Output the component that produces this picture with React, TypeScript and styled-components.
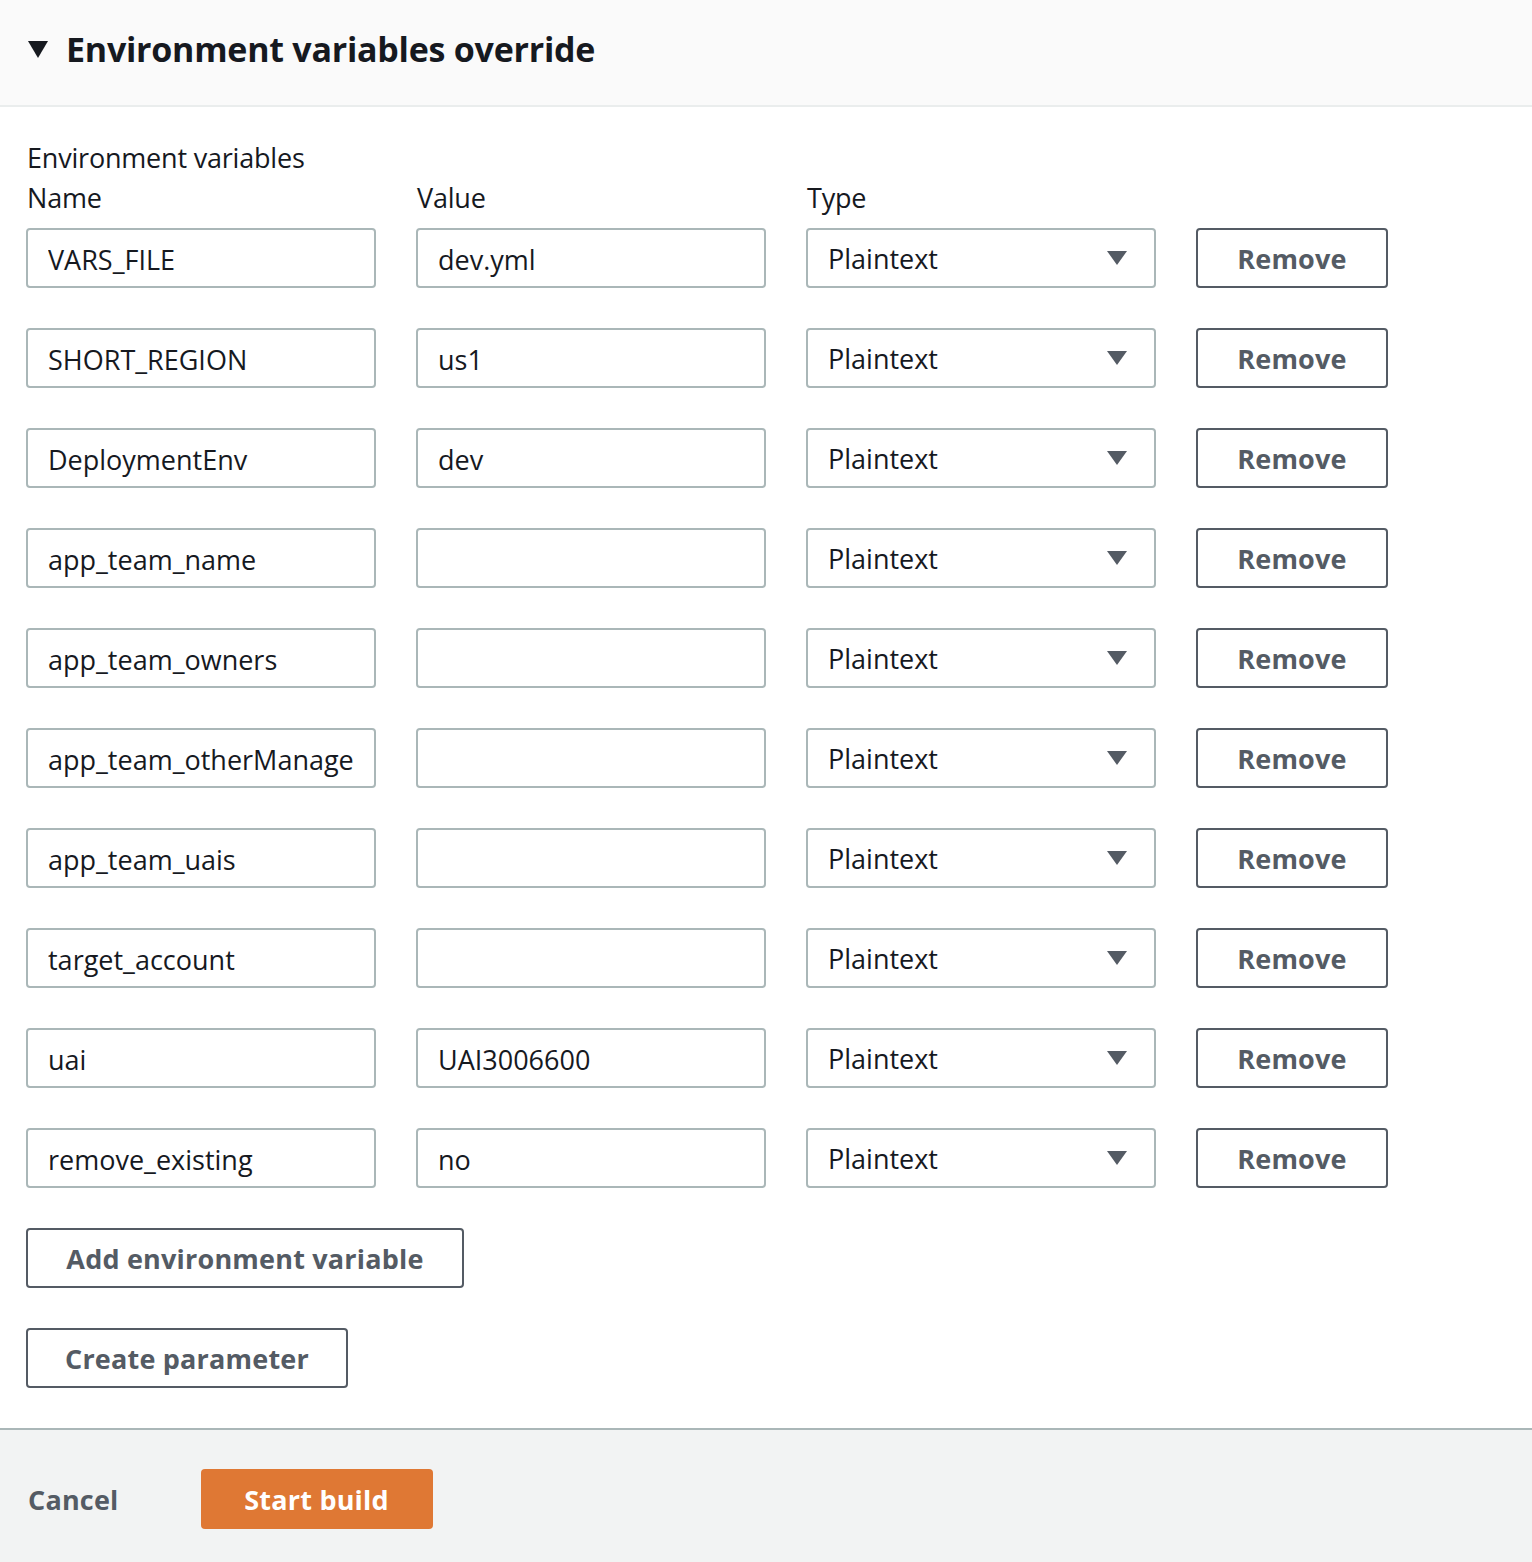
import React from "react";
import styled, { createGlobalStyle } from "styled-components";

const Global = createGlobalStyle`
  html, body { margin: 0; padding: 0; background: #ffffff; }
  body { font-family: "Open Sans", "Noto Sans", sans-serif; color: #16191f; }
  * { box-sizing: border-box; }
`;

const Page = styled.div`
  width: 1532px;
  min-height: 1562px;
  display: flex;
  flex-direction: column;
  background: #ffffff;
`;

const Header = styled.div`
  height: 107px;
  background: #fafafa;
  border-bottom: 2px solid #eaeded;
  display: flex;
  align-items: center;
  padding: 0 0 8px 28px;
  gap: 18px;
`;

const Caret = styled.svg`
  width: 20px;
  height: 18px;
  flex: none;
`;

const Title = styled.h2`
  margin: 0;
  font-family: "Open Sans", sans-serif;
  font-weight: 700;
  font-size: 34px;
  letter-spacing: -0.25px;
  color: #16191f;
`;

const Body = styled.div`
  padding: 31px 26px 40px 26px;
  display: flex;
  flex-direction: column;
`;

const SectionLabel = styled.div`
  font-size: 27px;
  line-height: 40px;
  letter-spacing: -0.2px;
  color: #16191f;
  padding-left: 1px;
`;

const Grid = styled.div`
  display: grid;
  grid-template-columns: 350px 350px 350px 192px;
  column-gap: 40px;
  row-gap: 40px;
  align-items: center;
`;

const ColHead = styled.div`
  font-size: 27px;
  line-height: 40px;
  letter-spacing: -0.2px;
  color: #16191f;
  margin-bottom: -30px;
  padding-left: 1px;
`;

const Field = styled.div`
  height: 60px;
  border: 2px solid #aab7b8;
  border-radius: 4px;
  background: #ffffff;
  padding: 3px 20px 0 20px;
  display: flex;
  align-items: center;
  font-size: 27px;
  color: #16191f;
  white-space: nowrap;
`;

const FieldText = styled.span`
  display: block;
  overflow: hidden;
  min-width: 0;
  flex: 1;
`;

const SelectBox = styled(Field)`
  justify-content: space-between;
  padding: 0 26px 0 20px;
`;

const OutlineButton = styled.button<{ $width?: number }>`
  height: 60px;
  width: ${(p) => (p.$width ? `${p.$width}px` : "auto")};
  border: 2px solid #545b64;
  border-radius: 4px;
  background: #ffffff;
  color: #545b64;
  font-family: "Open Sans", sans-serif;
  font-weight: 700;
  font-size: 27px;
  letter-spacing: 0.2px;
  display: flex;
  align-items: center;
  justify-content: center;
  padding: 0;
`;

const Actions = styled.div`
  display: flex;
  flex-direction: column;
  align-items: flex-start;
  gap: 40px;
  margin-top: 40px;
`;

const Footer = styled.div`
  flex: 1;
  background: #f2f3f3;
  border-top: 2px solid #aab7b8;
  display: flex;
  align-items: center;
  padding: 38px 0 32px 28px;
  gap: 82px;
`;

const Cancel = styled.span`
  font-weight: 700;
  font-size: 27px;
  color: #545b64;
  letter-spacing: 0.2px;
`;

const Primary = styled.button`
  height: 60px;
  width: 232px;
  border: none;
  border-radius: 4px;
  background: #df7834;
  color: #ffffff;
  font-family: "Open Sans", sans-serif;
  font-weight: 700;
  font-size: 27px;
  letter-spacing: 0.2px;
`;

const Arrow = () => (
  <svg width="22" height="16" viewBox="0 0 22 16">
    <polygon points="1,1 21,1 11,15" fill="#545b64" />
  </svg>
);

const rows: [string, string][] = [
  ["VARS_FILE", "dev.yml"],
  ["SHORT_REGION", "us1"],
  ["DeploymentEnv", "dev"],
  ["app_team_name", ""],
  ["app_team_owners", ""],
  ["app_team_otherManagers", ""],
  ["app_team_uais", ""],
  ["target_account", ""],
  ["uai", "UAI3006600"],
  ["remove_existing", "no"],
];

export default function App() {
  return (
    <Page>
      <Global />
      <Header>
        <Caret viewBox="0 0 20 18">
          <polygon points="0,1 20,1 10,18" fill="#16191f" />
        </Caret>
        <Title>Environment variables override</Title>
      </Header>
      <Body>
        <SectionLabel>Environment variables</SectionLabel>
        <Grid>
          <ColHead>Name</ColHead>
          <ColHead>Value</ColHead>
          <ColHead>Type</ColHead>
          <div />
          {rows.map(([n, v]) => (
            <React.Fragment key={n}>
              <Field>
                <FieldText>{n}</FieldText>
              </Field>
              <Field>
                <FieldText>{v}</FieldText>
              </Field>
              <SelectBox>
                <span>Plaintext</span>
                <Arrow />
              </SelectBox>
              <OutlineButton $width={192}>Remove</OutlineButton>
            </React.Fragment>
          ))}
        </Grid>
        <Actions>
          <OutlineButton $width={438}>Add environment variable</OutlineButton>
          <OutlineButton $width={322}>Create parameter</OutlineButton>
        </Actions>
      </Body>
      <Footer>
        <Cancel>Cancel</Cancel>
        <Primary>Start build</Primary>
      </Footer>
    </Page>
  );
}
